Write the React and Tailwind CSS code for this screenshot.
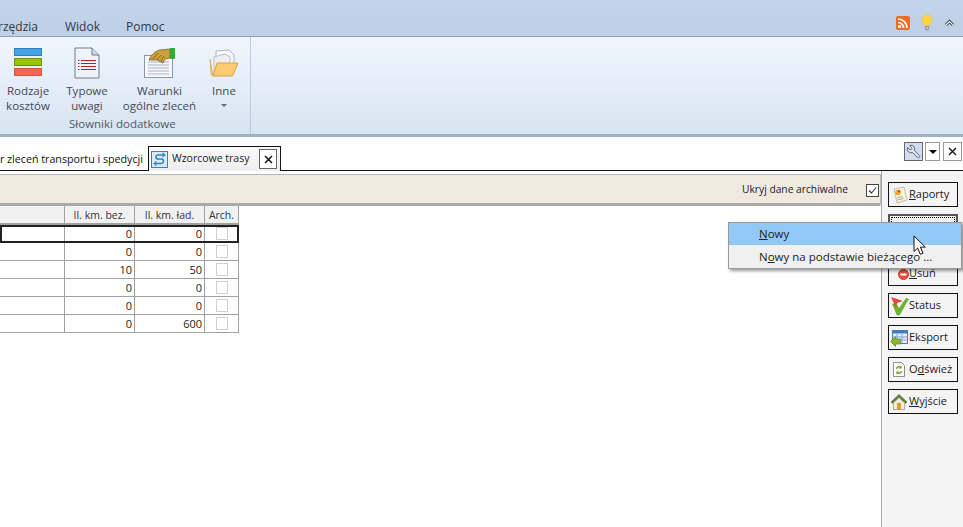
import React from 'react';
import { Wrench } from 'lucide-react';

const font = { fontFamily: '"Open Sans", "Noto Sans", sans-serif' };

const RssIcon = () => (
  <svg width="14" height="14" viewBox="0 0 14 14">
    <rect x="0" y="0" width="14" height="14" rx="2" fill="#e8702a" />
    <circle cx="3.5" cy="10.5" r="1.6" fill="#fff" />
    <path d="M2 6.5a5.5 5.5 0 0 1 5.5 5.5M2 3a9 9 0 0 1 9 9" stroke="#fff" strokeWidth="1.7" fill="none" />
  </svg>
);

const BulbIcon = () => (
  <svg width="12" height="17" viewBox="0 0 12 17">
    <path d="M6 0.5a5.2 5.2 0 0 0-5.2 5.2c0 2.6 2.4 3.8 2.8 6.3h4.8c.4-2.5 2.8-3.7 2.8-6.3A5.2 5.2 0 0 0 6 .5z" fill="#fbd44e" stroke="#f0c040" strokeWidth="0.6" />
    <path d="M3.8 12.5l1 3.5h2.4l1-3.5z" fill="#b7b9d4" stroke="#7c7fa8" strokeWidth="0.6" />
  </svg>
);

const CollapseIcon = () => (
  <svg width="11" height="8" viewBox="0 0 11 8">
    <path d="M2 6l3.5-3.5L9 6" fill="none" stroke="#25303d" strokeWidth="3" />
    <path d="M2 6l3.5-3.5L9 6" fill="none" stroke="#fff" strokeWidth="1.2" />
  </svg>
);

const KosztyIcon = () => (
  <svg width="28" height="30" viewBox="0 0 28 30">
    <rect x="0.5" y="0.5" width="27" height="7" fill="#45a3e6" stroke="#2f7fb4" />
    <rect x="0.5" y="10.5" width="27" height="7" fill="#99c400" stroke="#6f8f10" />
    <rect x="0.5" y="20.5" width="27" height="7" fill="#f8654c" stroke="#c95840" />
  </svg>
);

const UwagiIcon = () => (
  <svg width="27" height="32" viewBox="0 0 27 32">
    <path d="M1 1h17l7 7v23H1z" fill="#eef3fa" stroke="#6f7b8b" />
    <path d="M18 1v7h7" fill="#cfd9e6" stroke="#6f7b8b" />
    <path d="M7 13.5h15M7 16.5h15M7 19.5h15M7 22.5h15" stroke="#b4202e" strokeWidth="1" />
    <path d="M4 13.5h1.5M4 16.5h1.5M4 19.5h1.5M4 22.5h1.5" stroke="#b4202e" strokeWidth="1" />
  </svg>
);

const WarunkiIcon = () => (
  <svg width="33" height="32" viewBox="0 0 33 32">
    <rect x="1.5" y="8.5" width="28" height="22" fill="#f6f8fb" stroke="#8b97a6" />
    <path d="M5 15h21M5 18h21M5 21h21M5 24h21M5 27h21" stroke="#a8b3c0" strokeWidth="1" />
    <path d="M6 13c2-5 6-9 11-10l10-1v9l-5 1-2 4-6-3z" fill="#cda23c" stroke="#6d5216" strokeWidth="0.7" />
    <path d="M10 12l5-6M14 13l4-5M18 14l3-5" stroke="#6d5216" strokeWidth="0.7" />
    <rect x="27" y="1" width="5" height="11" fill="#3fa535" />
  </svg>
);

const FolderIcon = () => (
  <svg width="30" height="30" viewBox="0 0 30 30">
    <path d="M7 26V3l13-1 5 5v12z" fill="#f7f8f9" stroke="#aeb4bd" />
    <path d="M5 26V9l11-3 5 3v14z" fill="#eceef1" stroke="#bcc1c9" />
    <path d="M1 11l1 14c0 1.5 1 3 2 3z" fill="#f2c26f" stroke="#d69f4c" strokeWidth="0.6" />
    <path d="M8 15h21l-5 12c-.4 1-1 1-2 1H4z" fill="#fbcb6c" stroke="#dba14d" />
  </svg>
);

const RaportyIcon = () => (
  <svg width="17" height="18" viewBox="0 0 17 18">
    <path d="M3 3l10-2 3 13-10 3z" fill="#f8f3df" stroke="#c6c1a6" />
    <circle cx="7" cy="6.5" r="2.8" fill="#f0a030" />
    <path d="M7 6.5V3.7a2.8 2.8 0 0 1 2.7 2.1z" fill="#d84a30" />
    <path d="M6 12l6-1.5M6.5 14l6-1.5" stroke="#a7ab8f" />
  </svg>
);

const UsunIcon = () => (
  <svg width="11" height="11" viewBox="0 0 11 11">
    <circle cx="5.5" cy="5.5" r="5" fill="#e8503f" stroke="#c23c2e" />
    <rect x="2.5" y="4.5" width="6" height="2" fill="#fff" />
  </svg>
);

const StatusIcon = () => (
  <svg width="19" height="20" viewBox="0 0 19 20">
    <path d="M2.5 8l3.5-.5 3 5L16 2.5l2.5.5L9.5 19H7z" fill="#6cb52d" stroke="#5a9c24" strokeWidth="0.5" />
    <path d="M1 1l12 4-6 2-1 5z" fill="#e24a3a" />
  </svg>
);

const EksportIcon = () => (
  <svg width="18" height="18" viewBox="0 0 18 18">
    <rect x="2.5" y="1.5" width="15" height="13" fill="#e6eff9" stroke="#4a7eb8" />
    <rect x="2.5" y="1.5" width="15" height="3" fill="#3e7cc4" />
    <path d="M7 5v9M12 5v9M3 8h14M3 11h14" stroke="#7aa5d4" />
    <path d="M0.5 12.5l5-5V10h5v5h-5v2.5z" fill="#86b92c" stroke="#5f8a1c" strokeWidth="0.7" />
  </svg>
);

const OdswiezIcon = () => (
  <svg width="14" height="17" viewBox="0 0 14 17">
    <path d="M1.5 1.5h8l3 3v11h-11z" fill="#fbfcf6" stroke="#8a8f98" />
    <path d="M4.5 8a2.6 2.6 0 0 1 4.4-1.6M9.5 10a2.6 2.6 0 0 1-4.4 1.6" stroke="#6a9a20" strokeWidth="1.3" fill="none" />
    <path d="M9.5 4.5v3h-3zM4.5 13.5v-3h3z" fill="#6a9a20" />
  </svg>
);

const DomIcon = () => (
  <svg width="18" height="18" viewBox="0 0 19 18">
    <path d="M9.5 1L1 9l1.5 1.5L9.5 4l7 6.5L18 9z" fill="#5f7f3a" stroke="#4a5f30" strokeWidth="0.5" />
    <path d="M3.5 10l6-5.5 6 5.5v7h-12z" fill="#f3ecd6" stroke="#8d8566" strokeWidth="0.7" />
    <rect x="7.5" y="10" width="4" height="7" fill="#d99a2e" />
  </svg>
);

const ZlecenieIcon = () => (
  <svg width="17" height="17" viewBox="0 0 17 17">
    <rect x="0.5" y="0.5" width="16" height="16" fill="#dbe9f5" stroke="#2e87bd" />
    <path d="M13 4H7C4.5 4 4 8 7 8h3.5c3 0 2.5 4.5-.5 4.5H4" fill="none" stroke="#2e87bd" strokeWidth="1.6" />
    <path d="M11.5 2l2.5 2-2.5 2M5.5 10.5l-2.5 2 2.5 2" fill="none" stroke="#2e87bd" strokeWidth="1.1" />
  </svg>
);

const CursorIcon = () => (
  <svg width="14" height="21" viewBox="0 0 14 21">
    <path d="M1 1v15.5l3.7-3.4 2.6 6.2 2.7-1.1-2.6-6.1h5z" fill="#fff" stroke="#111" strokeWidth="1" />
  </svg>
);

const RibbonButton = ({ width, icon, lines, arrow }) => (
  <div className={`${width} flex flex-col items-center`}>
    <div className="h-[36px] flex items-center justify-center">{icon}</div>
    <div className="mt-[2px] text-[11.5px] leading-[15px] text-[#3f4a57] text-center whitespace-nowrap">
      {lines.map(line => <div key={line}>{line}</div>)}
      {arrow && <div className="flex justify-center pt-[6px]"><div className="w-0 h-0 border-x-[3px] border-x-transparent border-t-[3px] border-t-[#5f6a78]" /></div>}
    </div>
  </div>
);

const SideButton = ({ icon, children, className = '' }) => (
  <div className={`w-[70px] h-[25px] shrink-0 border border-[#111] flex items-center text-[11px] text-[#222] whitespace-nowrap ${className}`}>
    <div className="w-[20px] flex items-center justify-center">{icon}</div>
    <span>{children}</span>
  </div>
);

const rows = [
  { bez: 0, lad: 0 },
  { bez: 0, lad: 0 },
  { bez: 10, lad: 50 },
  { bez: 0, lad: 0 },
  { bez: 0, lad: 0 },
  { bez: 0, lad: 600 }
];

const App = () => {
  return (
    <div style={font} className="relative w-[963px] h-[527px] overflow-hidden bg-white flex flex-col">
      {/* menu tabs */}
      <div className="h-[37px] shrink-0 bg-gradient-to-b from-[#c3d4ea] to-[#bfd0e6] border-b border-[#8fa0b4] flex items-end text-[12px] text-[#2f3a48]">
        <div className="w-[65px] -ml-[10px] shrink-0 flex justify-end pr-[17px]">
          <span className="whitespace-nowrap">Narzędzia</span>
        </div>
        <div className="w-[61px] ml-[10px]">Widok</div>
        <div>Pomoc</div>
        <div className="ml-auto flex items-center mb-[5px] pr-[8px]">
          <RssIcon />
          <div className="ml-[11px]"><BulbIcon /></div>
          <div className="ml-[11px]"><CollapseIcon /></div>
        </div>
      </div>

      {/* ribbon */}
      <div className="h-[100px] shrink-0 bg-gradient-to-b from-[#f0f6fd] to-[#d8e4f2] border-b-[3px] border-[#9fb0c4] flex">
        <div className="w-[251px] shrink-0 border-r border-[#bccbdc] relative pt-[8px] pl-[3px] flex">
          <RibbonButton width="w-[50px]" icon={<KosztyIcon />} lines={['Rodzaje', 'kosztów']} />
          <RibbonButton width="w-[68px]" icon={<UwagiIcon />} lines={['Typowe', 'uwagi']} />
          <RibbonButton width="w-[77px]" icon={<WarunkiIcon />} lines={['Warunki', 'ogólne zleceń']} />
          <RibbonButton width="w-[52px]" icon={<FolderIcon />} lines={['Inne']} arrow />
          <div className="absolute left-[69px] bottom-[3px] text-[11.5px] leading-[15px] text-[#4f5b69] whitespace-nowrap">Słowniki dodatkowe</div>
        </div>
      </div>

      {/* document tabs */}
      <div className="h-[34px] shrink-0 relative flex items-end border-b border-[#111]">
        <div className="w-[148px] pb-[3px] text-[10.7px] text-[#111] whitespace-nowrap overflow-hidden flex justify-end pr-[5px]">Rejestr zleceń transportu i spedycji</div>
        <div className="w-[133px] h-[25px] -mb-[1px] border border-b-0 border-[#111] bg-gradient-to-b from-[#f8f9fb] to-[#eeeeee] flex items-center pl-[2px] text-[10.5px] text-[#222] relative z-10">
          <ZlecenieIcon />
          <span className="ml-[4px]">Wzorcowe trasy</span>
          <div className="ml-auto mr-[3px] w-[18px] h-[20px] border border-[#666] bg-white flex items-center justify-center">
            <svg width="9" height="9" viewBox="0 0 9 9"><path d="M1 1l7 7M8 1L1 8" stroke="#111" strokeWidth="1.5" /></svg>
          </div>
        </div>
        <div className="ml-auto flex items-center gap-[2px] mb-[9px] pr-[1px]">
          <div className="w-[19px] h-[19px] border border-[#667] bg-[#d3dceb] flex items-center justify-center">
            <Wrench size={15} strokeWidth={1.5} className="-scale-x-100 text-[#4c5a73] fill-[#e4e9f2]" />
          </div>
          <div className="w-[15px] h-[19px] border border-[#999] bg-white flex items-center justify-center">
            <div className="w-0 h-0 border-x-[4px] border-x-transparent border-t-[4px] border-t-black" />
          </div>
          <div className="w-[19px] h-[19px] ml-[1px] border border-[#999] bg-white flex items-center justify-center">
            <svg width="9" height="9" viewBox="0 0 9 9"><path d="M1 1l7 7M8 1L1 8" stroke="#111" strokeWidth="1.4" /></svg>
          </div>
        </div>
      </div>

      {/* body */}
      <div className="flex-1 min-h-0 flex">
        <div className="flex-1 min-w-0 pt-[3px]">
          <div className="h-[32px] bg-[#efe9e0] border-t border-t-[#b5b5b5] border-b-[3px] border-[#a9a9a9] border-r border-r-[#b8b8b8] rounded-br-[2px] pt-[2px] flex items-center justify-end text-[10.25px] text-[#222]">
            <span className="mr-[18px]">Ukryj dane archiwalne</span>
            <div className="w-[13px] h-[13px] border border-[#444] bg-white mr-[1px] flex items-center justify-center">
              <svg width="9" height="9" viewBox="0 0 9 9"><path d="M1 4.5l2.5 2.5L8 1.5" fill="none" stroke="#333" strokeWidth="1.1" /></svg>
            </div>
          </div>

          {/* grid */}
          <div className="w-[239px] text-[10.5px] text-[#222]">
            <div className="h-[19px] flex bg-[#f1f1f1] border-b-2 border-[#a0a0a0]">
              <div className="w-[65px] border-r border-[#a0a0a0]" />
              <div className="w-[70px] border-r border-[#a0a0a0] text-center leading-[18px] text-[#333]">Il. km. bez.</div>
              <div className="w-[70px] border-r border-[#a0a0a0] text-center leading-[18px] text-[#333]">Il. km. ład.</div>
              <div className="w-[34px] border-r border-[#a0a0a0] text-center leading-[18px] text-[#333]">Arch.</div>
            </div>
            {rows.map((row, i) => (
              <div key={i} className={`h-[18px] flex ${i === 0 ? 'outline-2 -outline-offset-2 outline-[#222]' : ''} border-b border-[#a0a0a0]`}>
                <div className="w-[65px] border-r border-[#a0a0a0]" />
                <div className="w-[70px] border-r border-[#a0a0a0] text-right pr-[2px] leading-[17px] text-[11px]">{row.bez}</div>
                <div className="w-[70px] border-r border-[#a0a0a0] text-right pr-[2px] leading-[17px] text-[11px]">{row.lad}</div>
                <div className="w-[34px] border-r border-[#a0a0a0] flex items-center justify-center">
                  <div className="w-[12px] h-[13px] border border-[#d0d0d0] bg-white" />
                </div>
              </div>
            ))}
          </div>
        </div>

        {/* side buttons */}
        <div className="w-[82px] shrink-0 border-l border-[#a8a8a8] bg-[#f4f4f4] pl-[6px] pt-[11px] flex flex-col">
          <SideButton icon={<RaportyIcon />}><span className="underline">R</span>aporty</SideButton>
          <div className="w-[70px] h-[25px] shrink-0 mt-[7px] border-2 border-[#555] p-[1px]">
            <div className="w-full h-full border border-dotted border-black" />
          </div>
          <SideButton className="mt-[22px]" icon={<div className="flex justify-end w-full pt-[2px]"><UsunIcon /></div>}><span className="underline">U</span>suń</SideButton>
          <SideButton className="mt-[7px]" icon={<StatusIcon />}>Status</SideButton>
          <SideButton className="mt-[7px]" icon={<EksportIcon />}>Eksport</SideButton>
          <SideButton className="mt-[7px]" icon={<OdswiezIcon />}>O<span className="underline">d</span>śwież</SideButton>
          <SideButton className="mt-[7px]" icon={<DomIcon />}><span className="underline">W</span>yjście</SideButton>
        </div>
      </div>

      {/* context menu */}
      <div className="absolute left-[728px] top-[222px] w-[234px] h-[47px] bg-[#f0f0f0] border border-[#999] shadow-[2px_2px_3px_rgba(0,0,0,0.4)] text-[11.5px] text-[#222]">
        <div className="h-[22px] bg-[#90c8f6] pl-[30px] leading-[22px]"><span className="underline">N</span>owy</div>
        <div className="h-[23px] pl-[30px] leading-[23px] whitespace-nowrap">N<span className="underline">o</span>wy na podstawie bieżącego ...</div>
      </div>
      <div className="absolute left-[913px] top-[235px]"><CursorIcon /></div>
    </div>
  );
};

export default App;
